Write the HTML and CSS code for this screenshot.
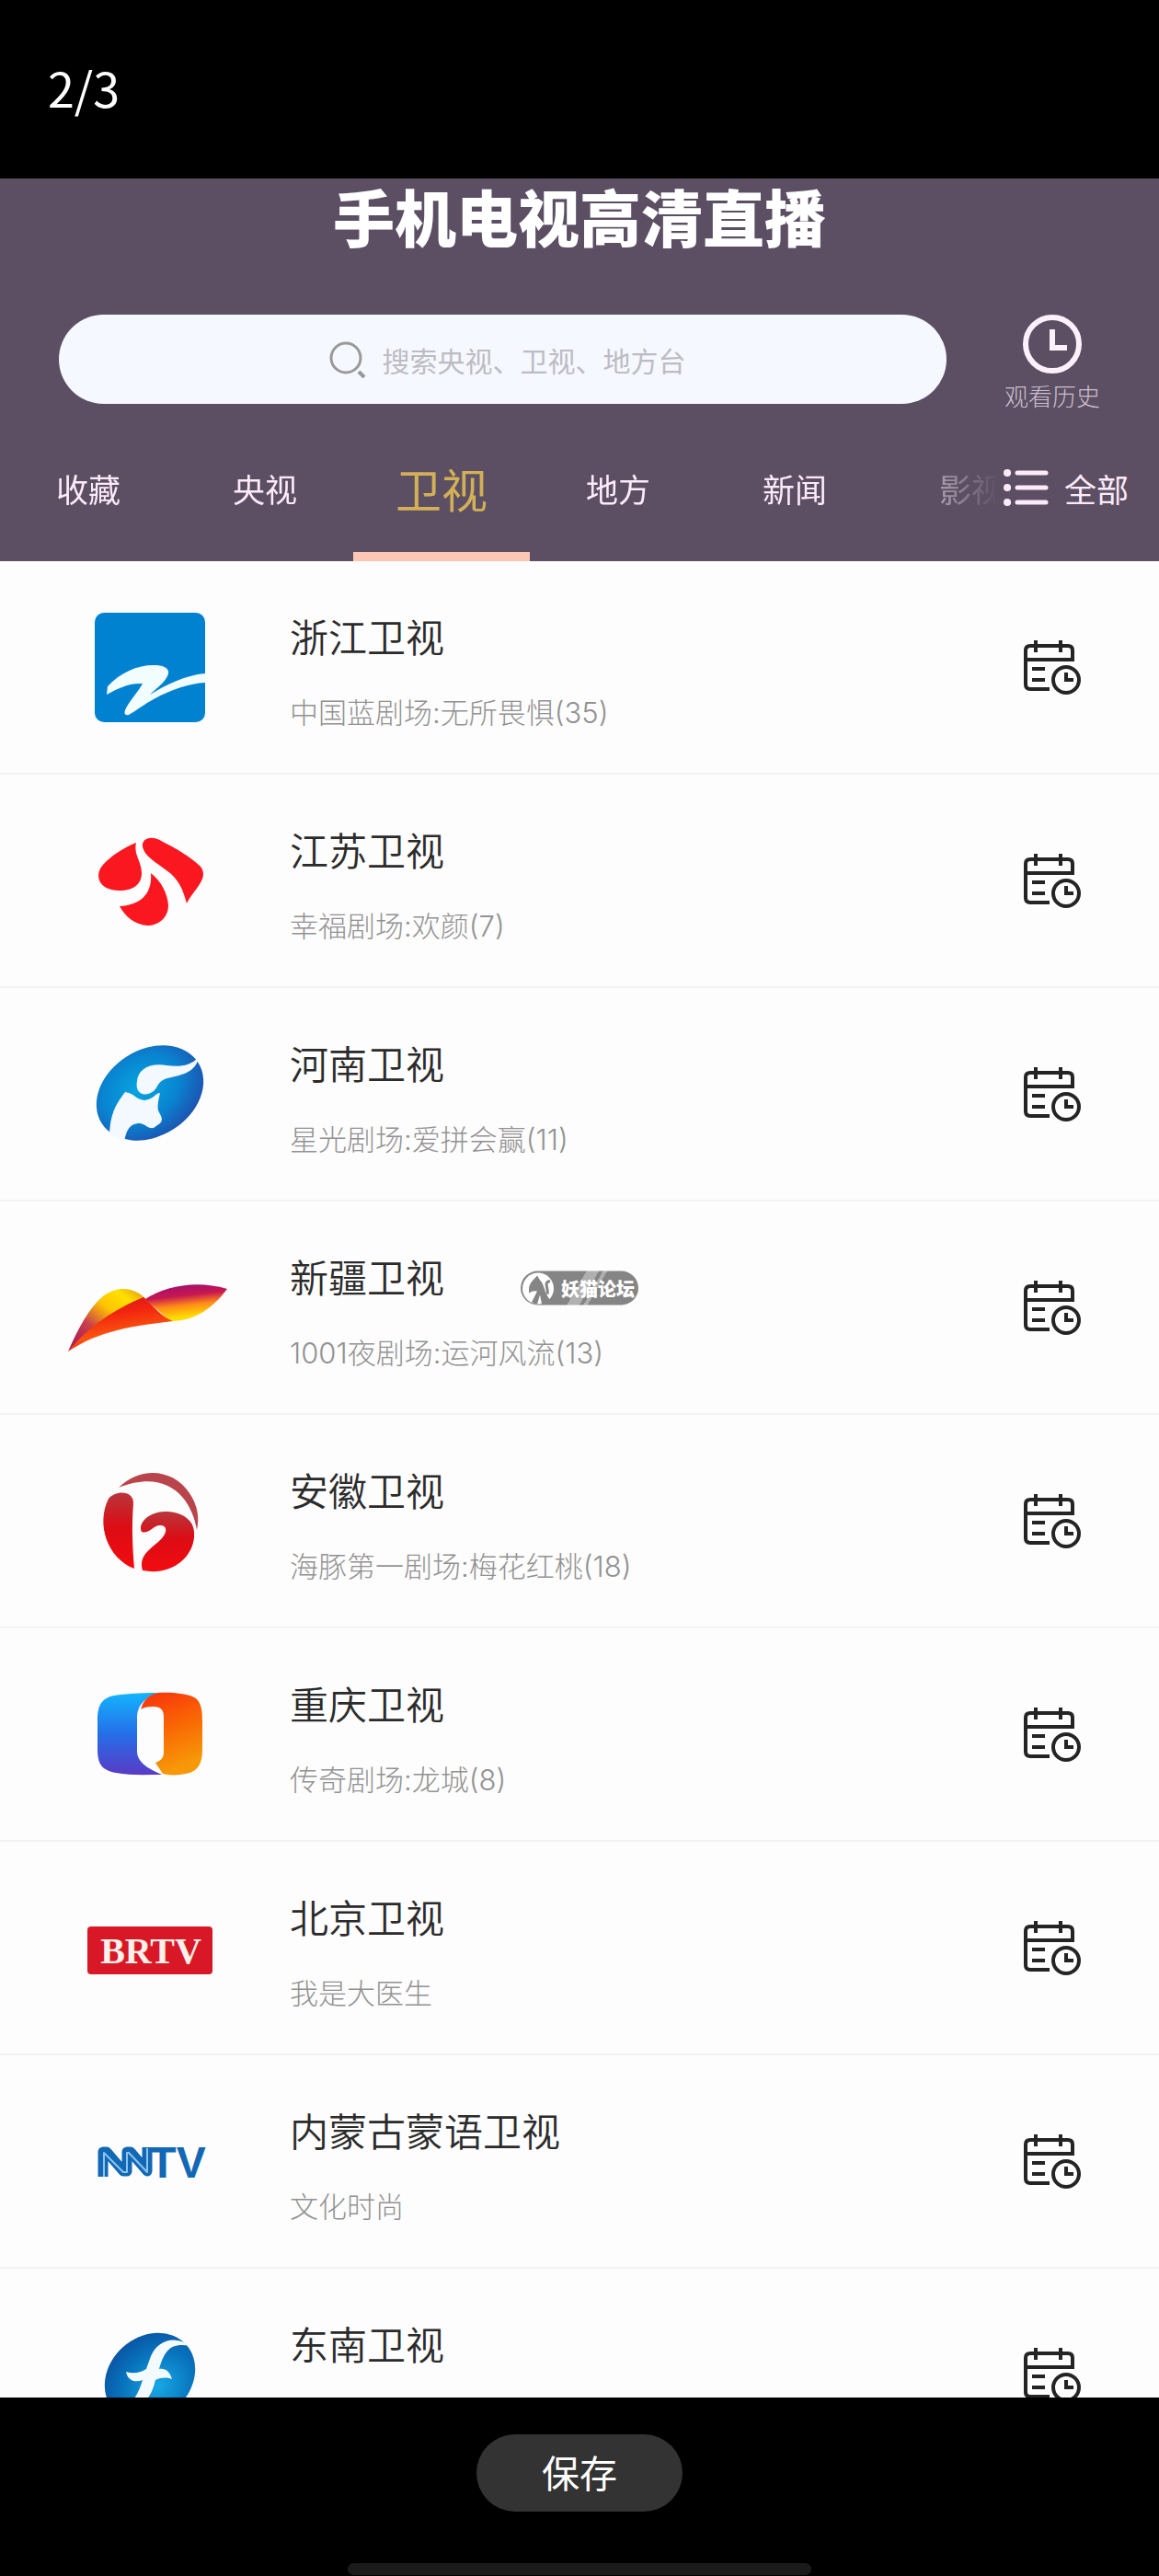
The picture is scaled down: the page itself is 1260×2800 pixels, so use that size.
FILE: index.html
```html
<!DOCTYPE html>
<html lang="zh-CN">
<head>
<meta charset="utf-8">
<meta name="viewport" content="width=device-width, initial-scale=1">
<title>手机电视高清直播</title>
<link rel="stylesheet" href="styles.css">
</head>
<body>
<svg class="defs" aria-hidden="true">
  <symbol id="schedule" viewBox="0 0 64 60">
    <g fill="none" stroke="#242424" stroke-width="4">
      <path d="M29 54H8Q3 54 3 49V12Q3 7 8 7H49Q54 7 54 12V22H3M14 1V14M41 1V14M10 32H24M10 44H24"/>
      <circle cx="47" cy="44" r="14"/>
      <path d="M47 36V44H55"/>
    </g>
  </symbol>
</svg>

<div class="viewer-top">2/3</div>

<main class="screen">
  <header class="header">
    <h1 class="title">手机电视高清直播</h1>
    <div class="tools">
      <label class="search">
        <svg class="search-icon" viewBox="0 0 40 40" fill="none" stroke="#999" stroke-width="3"><circle cx="18" cy="18" r="16"/><path d="M32 33L38 39" stroke-width="4"/></svg>
        <input class="search-input" type="text" placeholder="搜索央视、卫视、地方台" aria-label="搜索">
      </label>
      <button class="history" type="button">
        <svg class="history-icon" viewBox="0 0 64 64" fill="none" stroke="#fdf0fb"><circle cx="32" cy="32" r="29" stroke-width="6"/><path d="M32 16V36H48" stroke-width="6"/></svg>
        <span>观看历史</span>
      </button>
    </div>
    <div class="tabbar">
      <nav class="tabs">
        <a class="tab" href="#fav">收藏</a>
        <a class="tab" href="#cctv">央视</a>
        <a class="tab tab-active" href="#satellite">卫视</a>
        <a class="tab" href="#local">地方</a>
        <a class="tab" href="#news">新闻</a>
        <a class="tab" href="#movie">影视</a>
      </nav>
      <button class="all" type="button">
        <svg class="all-icon" viewBox="0 0 49 42" fill="none" stroke="#fdeaf9" stroke-width="5" stroke-linecap="round"><path d="M15 5H46M15 21H46M15 37H46"/><path stroke-width="8" d="M4 5h.1M4 21h.1M4 37h.1"/></svg>
        <span>全部</span>
      </button>
    </div>
  </header>

  <ul class="channels">
    <li class="channel">
      <svg class="logo" viewBox="0 0 200 160">
        <rect x="40" y="21" width="120" height="119" rx="10" fill="#0082d1"/>
        <path fill="#f2fdff" d="M53 110L54 101C68 86 86 78 104 78C116 78 123 82 119 90C114 99 107 103 100 110C118 99 138 89 160 87V97C143 98 124 104 104 115C93 121 84 128 77 132Q71 133 73 127C77 117 87 108 92 98C77 97 64 104 53 110Z"/>
      </svg>
      <div class="info"><h2 class="name">浙江卫视</h2><p class="show">中国蓝剧场:无所畏惧(35)</p></div>
      <button class="schedule" type="button" aria-label="节目单"><svg class="schedule-icon"><use href="#schedule"/></svg></button>
    </li>
    <li class="channel">
      <svg class="logo" viewBox="0 0 200 160" fill="#fb1720">
        <path d="M85 39C72 44 58 53 49 63C39 74 44 91 67 91C82 91 91 84 91 72C91 59 82 52 85 39Z"/>
        <path d="M92 43C91 34 102 30 114 38C130 46 143 54 153 63C160 69 159 77 154 84C149 92 143 98 140 105C136 91 133 82 122 72C110 62 94 55 92 43Z"/>
        <path d="M101 72C112 81 119 93 120 107C120 121 109 129 97 129C83 128 73 119 67 108C88 107 103 96 101 72Z"/>
      </svg>
      <div class="info"><h2 class="name">江苏卫视</h2><p class="show">幸福剧场:欢颜(7)</p></div>
      <button class="schedule" type="button" aria-label="节目单"><svg class="schedule-icon"><use href="#schedule"/></svg></button>
    </li>
    <li class="channel">
      <svg class="logo" viewBox="0 0 200 160">
        <defs><radialGradient id="hn" cx=".45" cy=".4" r=".65"><stop offset="0" stop-color="#08a6e0"/><stop offset=".55" stop-color="#0984d0"/><stop offset="1" stop-color="#1f4dac"/></radialGradient></defs>
        <ellipse cx="100" cy="79" rx="62" ry="47" transform="rotate(-32 100 79)" fill="url(#hn)"/>
        <path fill="#f4f8ff" d="M153 40C144 50 131 51 118 49C99 46 87 54 86 66C84 77 90 82 98 80C111 76 105 67 119 63C137 59 150 56 153 40Z"/>
        <path fill="#f4f8ff" d="M73 78C83 79 84 86 94 87C104 86 106 79 111 79C109 87 108 94 109 98C112 104 115 108 111 112L104 117C97 118 96 113 89 112C77 112 74 121 72 133L56 123C57 103 62 92 73 78Z"/>
      </svg>
      <div class="info"><h2 class="name">河南卫视</h2><p class="show">星光剧场:爱拼会赢(11)</p></div>
      <button class="schedule" type="button" aria-label="节目单"><svg class="schedule-icon"><use href="#schedule"/></svg></button>
    </li>
    <li class="channel">
      <svg class="logo" viewBox="0 0 200 160">
        <defs>
          <linearGradient id="xj1" x1="0" y1="1" x2="1" y2="0"><stop offset="0" stop-color="#a0105c"/><stop offset=".35" stop-color="#c8404a"/><stop offset=".6" stop-color="#ffc400"/><stop offset=".8" stop-color="#ffe000"/><stop offset="1" stop-color="#d88a10"/></linearGradient>
          <linearGradient id="xj2" x1="0" y1="0" x2=".3" y2="1"><stop offset="0" stop-color="#d0102c"/><stop offset=".4" stop-color="#f2260e"/><stop offset=".75" stop-color="#fb5410"/><stop offset="1" stop-color="#e8280e"/></linearGradient>
          <linearGradient id="xj3" x1=".4" y1="0" x2=".65" y2="1"><stop offset="0" stop-color="#a00f70"/><stop offset=".3" stop-color="#c81850"/><stop offset=".55" stop-color="#ff8a18"/><stop offset=".85" stop-color="#ffdc00"/></linearGradient>
        </defs>
        <path fill="url(#xj3)" d="M95 71C117 57 150 50 184 60C166 84 146 95 122 95Z"/>
        <path fill="url(#xj1)" d="M11 128C22 103 34 80 49 68C66 55 84 59 96 71C62 82 34 104 11 128Z"/>
        <path fill="url(#xj2)" d="M11 128C34 100 62 82 93 69C104 78 113 91 125 95C83 100 45 105 11 128Z"/>
      </svg>
      <div class="info"><h2 class="name">新疆卫视</h2><p class="show">1001夜剧场:运河风流(13)</p></div>
      <button class="schedule" type="button" aria-label="节目单"><svg class="schedule-icon"><use href="#schedule"/></svg></button>
    </li>
    <li class="channel">
      <svg class="logo" viewBox="0 0 200 160">
        <defs><linearGradient id="ah" x1="0" y1="0" x2="0" y2="1"><stop offset="0" stop-color="#b9363c"/><stop offset=".45" stop-color="#dc0c14"/><stop offset="1" stop-color="#f20c10"/></linearGradient></defs>
        <path fill="#b9444c" d="M66 44C90 20 126 24 143 50C152 63 154 77 151 90C146 58 121 22 66 44Z"/>
        <path fill="url(#ah)" d="M55 56C62 47 83 46 82 62C80 84 81 108 83 132C54 121 41 84 55 56Z"/>
        <path fill="url(#ah)" d="M91 92C86 81 102 69 118 70C139 71 150 82 148 98C146 122 121 140 92 134C87 116 103 110 113 99C120 91 118 84 110 85C103 86 98 95 91 92Z"/>
      </svg>
      <div class="info"><h2 class="name">安徽卫视</h2><p class="show">海豚第一剧场:梅花红桃(18)</p></div>
      <button class="schedule" type="button" aria-label="节目单"><svg class="schedule-icon"><use href="#schedule"/></svg></button>
    </li>
    <li class="channel">
      <svg class="logo" viewBox="0 0 200 160">
        <defs>
          <linearGradient id="cq1" x1="0" y1="0" x2="0" y2="1"><stop offset="0" stop-color="#14b4ff"/><stop offset=".5" stop-color="#246fe8"/><stop offset="1" stop-color="#5a3ac6"/></linearGradient>
          <linearGradient id="cq2" x1="0" y1="0" x2=".3" y2="1"><stop offset="0" stop-color="#f8300c"/><stop offset=".5" stop-color="#fa6404"/><stop offset="1" stop-color="#f69808"/></linearGradient>
        </defs>
        <path fill="url(#cq1)" d="M109 35C88 35 74 36 61 38C47 41 43 49 43 65V96C43 113 48 119 63 122C78 125 96 124 113 124C96 117 86 109 86 99V60Q87 43 109 35Z"/>
        <path fill="url(#cq2)" d="M109 35C124 34 138 36 146 39C155 42 157 52 157 66V97C157 112 152 119 143 122C133 125 120 125 114 123L106 111Q115 108 115 100V61Q115 50 104 50Q94 50 90 53Q94 38 109 35Z"/>
      </svg>
      <div class="info"><h2 class="name">重庆卫视</h2><p class="show">传奇剧场:龙城(8)</p></div>
      <button class="schedule" type="button" aria-label="节目单"><svg class="schedule-icon"><use href="#schedule"/></svg></button>
    </li>
    <li class="channel">
      <svg class="logo" viewBox="0 0 200 160">
        <rect x="32" y="57" width="136" height="52" rx="4" fill="#d81826"/>
        <text class="logo-serif" x="101" y="97" text-anchor="middle">BRTV</text>
      </svg>
      <div class="info"><h2 class="name">北京卫视</h2><p class="show">我是大医生</p></div>
      <button class="schedule" type="button" aria-label="节目单"><svg class="schedule-icon"><use href="#schedule"/></svg></button>
    </li>
    <li class="channel">
      <svg class="logo" viewBox="0 0 200 160">
        <path fill="none" stroke="#1268b4" stroke-width="11" stroke-linejoin="round" d="M49 97V70H53L71 91H75V70H79L97 91V65"/>
        <path fill="none" stroke="#8cc4ee" stroke-width="2" stroke-linejoin="round" d="M50 97V71L71 92H75V71H77L97 92V66"/>
        <text class="logo-sans" x="130" y="98" text-anchor="middle">TV</text>
      </svg>
      <div class="info"><h2 class="name">内蒙古蒙语卫视</h2><p class="show">文化时尚</p></div>
      <button class="schedule" type="button" aria-label="节目单"><svg class="schedule-icon"><use href="#schedule"/></svg></button>
    </li>
    <li class="channel">
      <svg class="logo" viewBox="0 0 200 160">
        <defs><radialGradient id="dn" cx=".5" cy=".65" r=".65"><stop offset="0" stop-color="#18a8e4"/><stop offset=".6" stop-color="#0874be"/><stop offset="1" stop-color="#0a56a4"/></radialGradient></defs>
        <ellipse cx="100" cy="83" rx="53" ry="44" transform="rotate(-42 100 83)" fill="url(#dn)"/>
        <path fill="#f4fbff" d="M144 49C126 36 108 44 101 60L96 74C88 79 81 79 74 77C76 87 84 89 92 86C87 104 79 113 68 119C90 118 101 108 106 86C113 83 118 83 124 85C121 76 117 73 110 74C116 53 123 45 144 49Z"/>
      </svg>
      <div class="info"><h2 class="name">东南卫视</h2></div>
      <button class="schedule" type="button" aria-label="节目单"><svg class="schedule-icon"><use href="#schedule"/></svg></button>
    </li>
  </ul>
</main>

<footer class="viewer-bottom">
  <button class="save" type="button">保存</button>
  <div class="home-bar"></div>
</footer>

<div class="watermark">
  <svg class="watermark-icon" viewBox="0 0 36 36"><circle cx="18" cy="18" r="17" fill="#fff"/><path fill="#858585" d="M8 19C8 12 13 9 17 4L20 9C25 13 24 22 32 32Q27 36 22 35L20 25L17 35Q13 35 11 33L17 21Q12 20 8 23Z"/><path fill="none" stroke="#858585" stroke-width="3" d="M31 10C23 11 30 19 28 24"/></svg>
  <span>妖猫论坛</span>
</div>
</body>
</html>
```

FILE: styles.css
```css
* {
  box-sizing: border-box;
}

body {
  display: flex;
  flex-direction: column;
  height: 100vh;
  margin: 0;
  background: #000;
  font-family: "Noto Sans CJK SC", "Noto Sans", sans-serif;
}

button {
  padding: 0;
  border: 0;
  background: none;
  color: inherit;
  font-family: inherit;
}

.defs {
  position: absolute;
  width: 0;
  height: 0;
}

.viewer-top {
  display: flex;
  flex: none;
  align-items: center;
  height: 194px;
  padding: 0 52px 6px;
  color: #fff;
  font-size: 52px;
}

.screen {
  flex: 1;
  min-height: 0;
  overflow: hidden;
  background: #fdfdfd;
}

/* Header */

.header {
  background: #5c4f63;
  color: #fdeaf9;
}

.title {
  margin: 0;
  color: #fff;
  font-size: 67px;
  font-weight: 900;
  line-height: 80px;
  text-align: center;
}

.tools {
  display: flex;
  gap: 60px;
  align-items: flex-start;
  padding: 68px 61px 16px 64px;
}

.search {
  display: flex;
  flex: 1;
  gap: 18px;
  align-items: center;
  justify-content: center;
  height: 97px;
  padding-left: 20px;
  border-radius: 49px;
  background: #f6f8ff;
}

.search-icon {
  width: 40px;
  height: 40px;
}

.search-input {
  width: 340px;
  padding: 0;
  border: 0;
  outline: 0;
  background: none;
  color: #555;
  font-family: inherit;
  font-size: 30px;
}

.search-input::placeholder {
  color: #bcbcc2;
}

.history {
  display: flex;
  flex-direction: column;
  gap: 6px;
  align-items: center;
  width: 110px;
  color: #cbbfcd;
  font-size: 26px;
  font-weight: 300;
  line-height: 36px;
}

.history-icon {
  width: 64px;
  height: 64px;
}

.tabbar {
  display: flex;
  height: 146px;
}

.tabs {
  display: flex;
  flex: 1;
  min-width: 0;
  overflow: hidden;
  -webkit-mask-image: linear-gradient(to left, transparent, #000 130px);
  mask-image: linear-gradient(to left, transparent, #000 130px);
}

.tab {
  display: flex;
  flex: 0 0 192px;
  align-items: center;
  justify-content: center;
  padding-bottom: 4px;
  border-bottom: 10px solid transparent;
  color: inherit;
  font-size: 35px;
  text-decoration: none;
}

.tab-active {
  border-bottom-color: #fcc7b4;
  color: #d3b057;
  font-size: 50px;
}

.all {
  display: flex;
  flex: none;
  gap: 17px;
  align-items: center;
  padding: 0 33px 14px 5px;
  font-size: 35px;
}

.all-icon {
  width: 49px;
  height: 42px;
}

/* Channel list */

.channels {
  margin: 0;
  padding: 0;
  list-style: none;
}

.channel {
  display: flex;
  align-items: center;
  height: 232px;
  padding: 0 84px 0 63px;
  border-bottom: 2px solid #f3f3f3;
}

.logo {
  flex: none;
  width: 200px;
  height: 160px;
}

.logo-serif {
  fill: #fff0ea;
  font-family: "Liberation Serif", serif;
  font-size: 40px;
  font-weight: 700;
}

.logo-sans {
  fill: #1268b4;
  font-family: "Liberation Sans", sans-serif;
  font-size: 48px;
  font-weight: 700;
}

.info {
  flex: 1;
  align-self: flex-start;
  min-width: 0;
  padding: 49px 0 0 52px;
}

.name,
.show {
  margin: 0;
  overflow: hidden;
  text-overflow: ellipsis;
  white-space: nowrap;
}

.name {
  color: #2b2b2b;
  font-size: 42px;
  font-weight: 350;
  line-height: 64px;
}

.show {
  margin-top: 28px;
  color: #929292;
  font-family: Inter, "Noto Sans CJK SC", sans-serif;
  font-size: 31px;
  font-weight: 300;
  line-height: 48px;
}

.schedule,
.schedule-icon {
  display: block;
  flex: none;
  width: 64px;
  height: 60px;
}

/* Viewer footer */

.viewer-bottom {
  display: flex;
  flex: none;
  flex-direction: column;
  align-items: center;
  justify-content: space-between;
  height: 194px;
  padding: 40px 0 1px;
}

.save {
  width: 224px;
  height: 84px;
  padding-bottom: 4px;
  border-radius: 42px;
  background: #333;
  color: #fff;
  font-size: 41px;
}

.home-bar {
  width: 40%;
  height: 13px;
  border-radius: 7px;
  background: #1b1b1b;
}

.watermark {
  position: absolute;
  top: 50%;
  left: 50%;
  display: flex;
  gap: 7px;
  align-items: center;
  width: 128px;
  height: 37px;
  padding-left: 1px;
  transform: translate(-50%, -50%);
  border-radius: 19px;
  background: linear-gradient(120deg, #858585 48%, #b0b0b0 48% 57%, #858585 57% 60%, #b0b0b0 60% 63%, #858585 63%);
  color: #fff;
  font-size: 20px;
  font-weight: 900;
  line-height: 37px;
  white-space: nowrap;
}

.watermark-icon {
  flex: none;
  width: 36px;
  height: 36px;
}
```
